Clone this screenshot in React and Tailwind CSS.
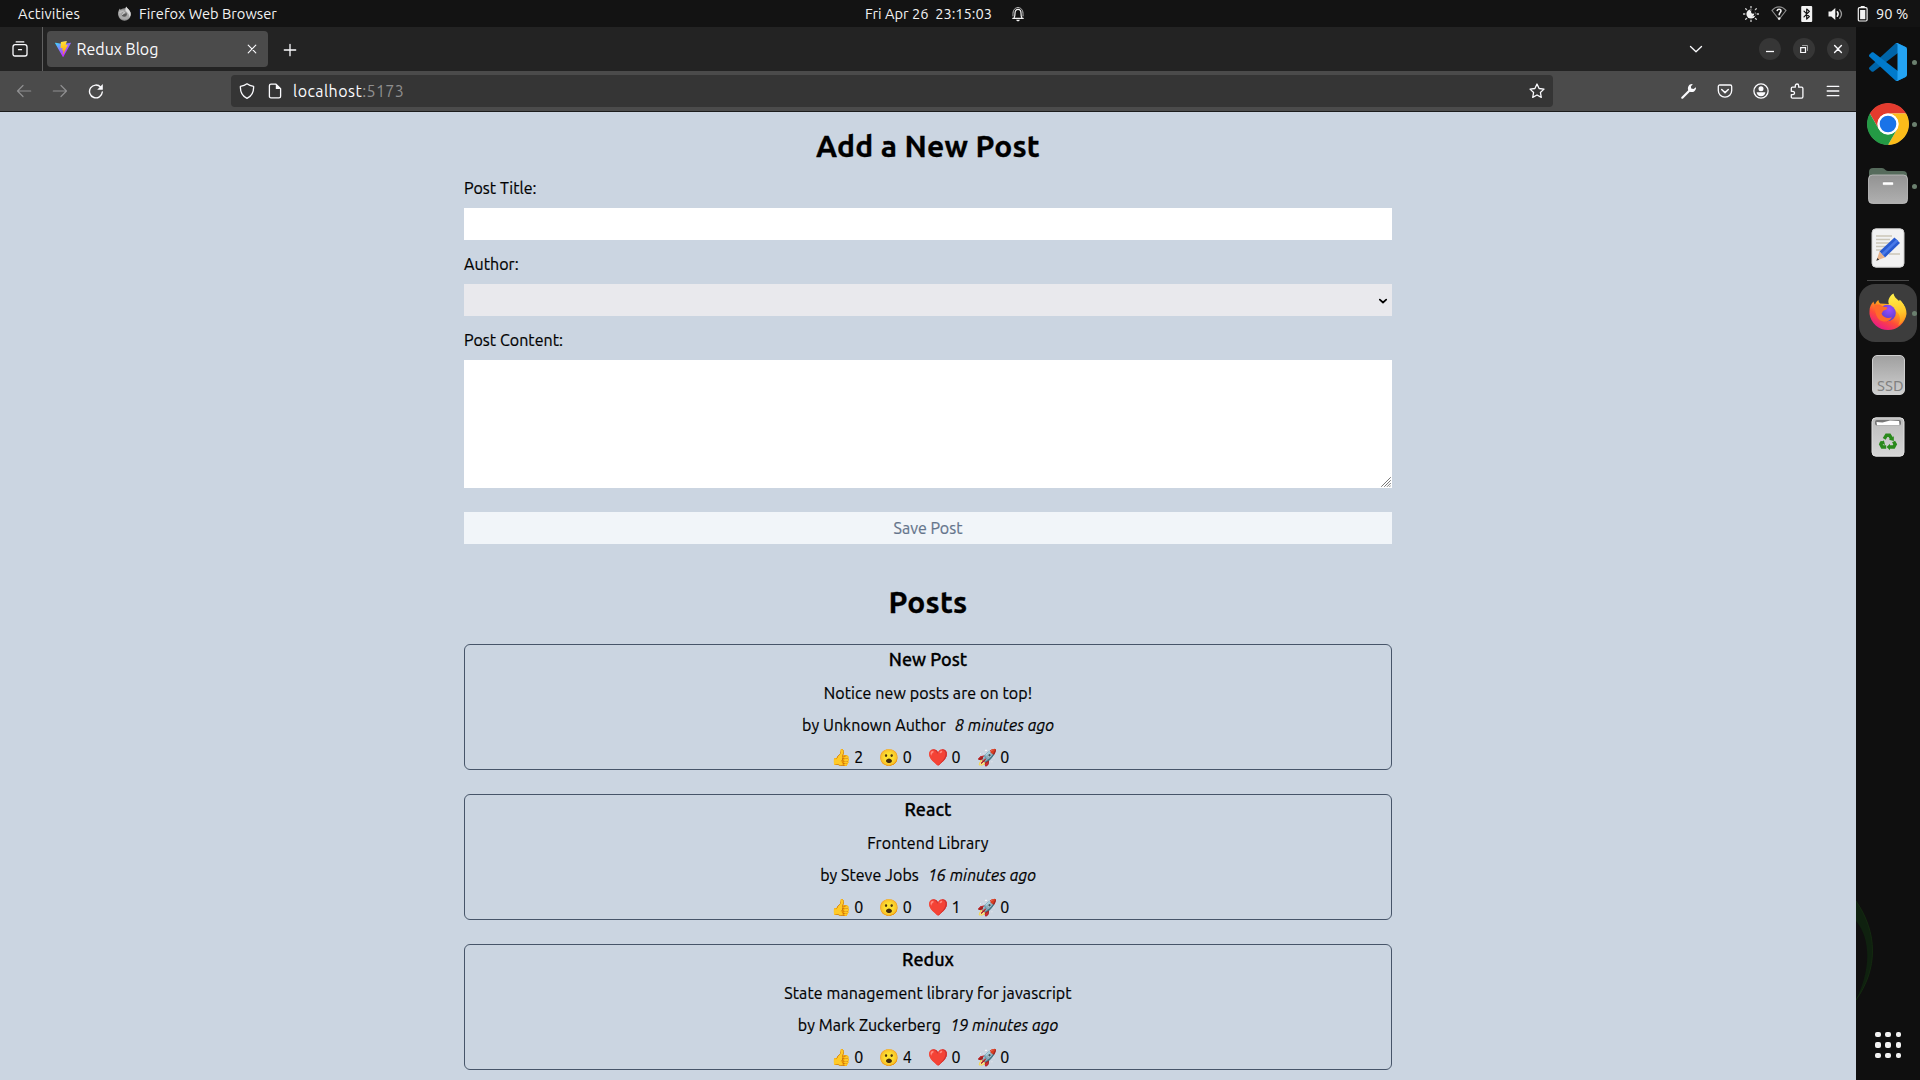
import React from "react";

const posts = [
  {
    title: "New Post",
    body: "Notice new posts are on top!",
    author: "Unknown Author",
    ago: "8 minutes ago",
    counts: [2, 0, 0, 0],
  },
  {
    title: "React",
    body: "Frontend Library",
    author: "Steve Jobs",
    ago: "16 minutes ago",
    counts: [0, 0, 1, 0],
  },
  {
    title: "Redux",
    body: "State management library for javascript",
    author: "Mark Zuckerberg",
    ago: "19 minutes ago",
    counts: [0, 4, 0, 0],
  },
];

const emojis = ["👍", "😮", "❤️", "🚀"];

function Icon({ children, size = 16, className = "" }) {
  return (
    <svg
      width={size}
      height={size}
      viewBox={`0 0 ${size} ${size}`}
      fill="none"
      stroke="currentColor"
      strokeWidth="1.3"
      strokeLinecap="round"
      strokeLinejoin="round"
      className={"block shrink-0 " + className}
    >
      {children}
    </svg>
  );
}

/* ---------- System bar ---------- */

function SystemBar() {
  return (
    <header className="grid h-[27px] shrink-0 grid-cols-[1fr_auto_1fr] items-center bg-[#131313] text-[14.67px] leading-[27px] text-[#f2f2f2]">
      <div className="flex items-center pl-[18px]">
        <span className="w-[99px] tracking-[0.2px]">Activities</span>
        <Icon className="mr-[6px]">
          <circle cx="7.5" cy="8.5" r="6.2" fill="#8f8f8f" stroke="none" />
          <path d="M1.2 8C1 5.5 2 3.5 3 2.5c.2 1 .7 1.500 1.500 1.800C6 3.500 7.500 4 8 4.500c-.3-1.500.4-3 1.600-4 .3 1.300 1 2 2 3 1.600 1.500 2.400 3 2.200 5.500A6.500 6.500 0 0 1 1.200 8Z" fill="#a9a9a9" stroke="none" />
          <path d="M9.500 1c.5 1.500 4 3 4 7a6 6 0 0 1-1 3.400C12.500 7 9 6 8.600 4.500 8.400 3.300 8.800 2 9.500 1Z" fill="#dcdcdc" stroke="none" />
          <circle cx="7.300" cy="8.300" r="2.500" fill="#5a5a5a" stroke="none" />
          <path d="M3 6.500c1-1 3.500-.8 5 .3-1.300 0-2 .8-2.600 1.500" stroke="#c4c4c4" strokeWidth="1.400" />
        </Icon>
        <span>Firefox Web Browser</span>
      </div>
      <div className="mr-[30px] flex items-center gap-[17px]">
        <span className="w-[129px] whitespace-pre text-center">{"Fri Apr 26  23:15:03"}</span>
        <Icon>
          <path d="M2.800 12.400h10.400M4 12.200c1-1.400 1-2.800 1-5C5 4.800 6.200 3.300 8 3.300s3 1.500 3 3.900c0 2.200 0 3.600 1 5" stroke="#f2f2f2" strokeWidth="1.200" />
          <path d="M3 10c-.3-4 .3-8 5-8.500 4.700.5 5.300 4.500 5 8.500" stroke="#bdbdbd" strokeWidth="1" />
          <path d="M6.200 13.800h3.600c-.3 1.200-1 1.500-1.800 1.500s-1.500-.3-1.800-1.500Z" fill="#f2f2f2" stroke="none" />
        </Icon>
      </div>
      <div className="flex items-center justify-end pr-[12px]">
        <Icon className="mr-[12px]">
          <circle cx="8" cy="8" r="4.600" fill="#f2f2f2" stroke="none" />
          <path d="M9.600 3.200a3.500 3.500 0 1 0 3.300 5.200" fill="#131313" stroke="none" />
          <path d="M9 3.400a3.400 3.400 0 1 0 4 4.600 2.600 2.600 0 0 1-4-4.600Z" fill="#131313" stroke="none" />
          <circle cx="8.200" cy="7.600" r="3" fill="#f2f2f2" stroke="none" />
          <circle cx="10" cy="5.800" r="2" fill="#131313" stroke="none" />
          <path d="M8 .5v1.300M8 14.200v1.300M.5 8h1.300M14.200 8h1.300M2.700 2.700l.9.900M12.400 12.400l.9.900M2.700 13.300l.9-.9M12.400 3.600l.9-.9" stroke="#d0d0d0" />
        </Icon>
        <Icon className="mr-[12px]">
          <path d="M1 4.500C5-.3 11-.3 15 4.500L8 13.500Z" stroke="#8a8a8a" strokeWidth="1.200" />
          <path d="M6.200 4.500c.2-1.700 3.800-1.700 3.800.2C10 6.500 8.200 6.500 8.200 8.800" stroke="#f2f2f2" strokeWidth="1.600" />
          <circle cx="8.200" cy="12.500" r="1.200" fill="#f2f2f2" stroke="none" />
        </Icon>
        <Icon className="mr-[12px]">
          <rect x="2.200" y="0" width="11" height="16" rx="1" fill="#f2f2f2" stroke="none" />
          <path d="M5 5.200l5.400 5.400L7.700 13V3l2.700 2.400L5 10.800" stroke="#131313" strokeWidth="1.200" />
        </Icon>
        <Icon className="mr-[11px]">
          <path d="M1.500 5.500h2.800L8.300 2v12L4.300 10.500H1.500Z" fill="#f2f2f2" stroke="none" />
          <path d="M10.300 5.800c1 1.300 1 3.100 0 4.400" stroke="#f2f2f2" strokeWidth="1.500" />
          <path d="M12.800 3.800c2 2.500 2 5.900 0 8.400" stroke="#9a9a9a" strokeWidth="1.300" />
        </Icon>
        <Icon className="mr-[6px]">
          <path d="M6.700 0h4v2h-4z" fill="#f2f2f2" stroke="none" />
          <rect x="4.300" y="1.700" width="8.800" height="13.300" rx="1.200" stroke="#f2f2f2" strokeWidth="1.200" />
          <rect x="6.100" y="4" width="5.200" height="9.200" fill="#f2f2f2" stroke="none" />
        </Icon>
        <span className="w-[32px] whitespace-nowrap">90 %</span>
      </div>
    </header>
  );
}

/* ---------- Browser chrome ---------- */

function ViteLogo() {
  return (
    <svg width="16" height="16" viewBox="0 0 256 257" className="block shrink-0">
      <defs>
        <linearGradient id="viteA" x1="-.828%" x2="57.636%" y1="7.652%" y2="78.411%">
          <stop offset="0%" stopColor="#41D1FF" />
          <stop offset="100%" stopColor="#BD34FE" />
        </linearGradient>
        <linearGradient id="viteB" x1="43.376%" x2="50.316%" y1="2.242%" y2="89.030%">
          <stop offset="0%" stopColor="#FFEA83" />
          <stop offset="8.333%" stopColor="#FFDD35" />
          <stop offset="100%" stopColor="#FFA800" />
        </linearGradient>
      </defs>
      <path fill="url(#viteA)" d="M255.153 37.938L134.897 252.976c-2.483 4.440-8.862 4.466-11.382.048L.875 37.958c-2.746-4.814 1.371-10.646 6.827-9.670l120.385 21.517a6.537 6.537 0 0 0 2.322-.004l117.867-21.483c5.438-.991 9.574 4.796 6.877 9.620Z" />
      <path fill="url(#viteB)" d="M185.432.063L96.440 17.501a3.268 3.268 0 0 0-2.634 3.014l-5.474 92.456a3.268 3.268 0 0 0 3.997 3.378l24.777-5.718c2.318-.535 4.413 1.507 3.936 3.838l-7.361 36.047c-.495 2.426 1.782 4.500 4.151 3.780l15.304-4.649c2.372-.720 4.652 1.360 4.150 3.788l-11.698 56.621c-.732 3.542 3.979 5.473 5.943 2.437l1.313-2.028l72.516-144.720c1.215-2.423-.880-5.186-3.540-4.672l-25.505 4.922c-2.396.462-4.435-1.770-3.759-4.114l16.646-57.705c.677-2.350-1.370-4.583-3.769-4.113Z" />
    </svg>
  );
}

function WindowButton({ children }) {
  return (
    <div className="flex size-[22px] items-center justify-center rounded-full bg-[#363636]">
      {children}
    </div>
  );
}

function TabStrip() {
  return (
    <div className="flex h-11 shrink-0 items-center bg-[#232323] text-[#fbfbfe]">
      <div className="flex h-full w-[43px] items-center border-r border-[#606060] pl-[12px]">
        <Icon>
          <path d="M4.200.9h7.600M1 6c0-1.500.8-2.300 2.200-2.300h9.600C14.200 3.700 15 4.500 15 6v7c0 1.300-.7 2-2 2H3c-1.300 0-2-.7-2-2ZM6.500 8.700h3" />
        </Icon>
      </div>
      <div className="ml-1 flex h-9 w-[221px] items-center rounded bg-[#4b4b4b] pl-2 pr-[11px]">
        <ViteLogo />
        <span className="ml-[5.500px] flex-1 text-base leading-9">Redux Blog</span>
        <Icon size={10}>
          <path d="M1.200 1.200l7.600 7.600M8.800 1.200L1.200 8.800" strokeWidth="1.100" />
        </Icon>
      </div>
      <Icon size={14} className="ml-[14.500px] mt-px">
        <path d="M7 1.300v11.400M1.300 7h11.400" />
      </Icon>
      <div className="ml-auto flex items-center pr-[7px]">
        <Icon size={14} className="mr-[56px]">
          <path d="M1.500 4.500L7 9.700l5.500-5.200" />
        </Icon>
        <div className="flex gap-3">
          <WindowButton>
            <Icon size={10}>
              <path d="M1 7.500h8" strokeLinecap="butt" />
            </Icon>
          </WindowButton>
          <WindowButton>
            <Icon size={10}>
              <path d="M1.700 3.700h4.800v4.800H1.700z" strokeWidth="1.200" strokeLinejoin="miter" />
              <path d="M3.500 1.500h5v5" stroke="#a0a0a0" strokeWidth="1" strokeLinejoin="miter" />
            </Icon>
          </WindowButton>
          <WindowButton>
            <Icon size={10}>
              <path d="M1.600 1.600l6.800 6.800M8.400 1.600L1.600 8.400" strokeWidth="1.400" />
            </Icon>
          </WindowButton>
        </div>
      </div>
    </div>
  );
}

function Toolbar() {
  return (
    <div className="flex h-[41px] shrink-0 items-center border-b border-[#1b1b1b] bg-[#4b4b4b] pr-[15.500px] text-[#fbfbfe]">
      <div className="flex w-[231px] items-center gap-5 pl-4">
        <Icon className="text-[#8f8f91]">
          <path d="M14.700 8H1.500M7 2.500L1.500 8 7 13.500" strokeWidth="1.200" />
        </Icon>
        <Icon className="text-[#8f8f91]">
          <path d="M1.300 8h13.200M9 2.500L14.500 8 9 13.500" strokeWidth="1.200" />
        </Icon>
        <Icon>
          <path d="M14.300 9A6.400 6.400 0 1 1 12.700 4.200" strokeWidth="1.400" />
          <path d="M14.800 1v5.200a.5.500 0 0 1-.5.500H9.200Z" fill="currentColor" stroke="none" />
        </Icon>
      </div>
      <div className="flex h-8 w-[1322px] items-center rounded bg-[#353535] pl-2 pr-2">
        <Icon>
          <path d="M8 .8c2 1.600 4.300 2.200 6.600 2.500.3 5.400-1.800 9.700-6.600 12C3.200 13 1.100 8.700 1.400 3.300 3.700 3 6 2.400 8 .8Z" strokeWidth="1.300" />
        </Icon>
        <Icon className="ml-3">
          <path d="M4 1.200h5l4.600 4.600v7.400c0 1-.6 1.600-1.600 1.600H4c-1 0-1.600-.6-1.600-1.600V2.800c0-1 .6-1.600 1.600-1.600Z" />
          <path d="M8.800 1.200v4.800h4.800Z" fill="currentColor" stroke="none" />
        </Icon>
        <span className="ml-[10px] text-base leading-8">
          <span className="tracking-[0.450px]">localhost</span>
          <span className="tracking-[0.400px] text-[#8f8f8f]">:5173</span>
        </span>
        <Icon className="ml-auto">
          <path d="M8 1l2.100 4.500 4.900.6-3.600 3.400.9 4.900L8 12l-4.300 2.400.9-4.900L1 6.100l4.900-.6Z" />
        </Icon>
      </div>
      <div className="ml-auto flex gap-5">
        <Icon>
          <path d="M1.300 14.700L8.500 7.500" strokeWidth="2.200" />
          <path d="M15 4.200c.3 2.500-1.600 4.900-4.200 4.800-2.700 0-4.400-2.200-3.800-4.600C7.500 2 9.600.8 11.800 1.100L9.900 3.400l.3 2.200 2.300.3Z" fill="currentColor" stroke="none" />
        </Icon>
        <Icon>
          <path d="M2.800 2h10.400c.9 0 1.500.6 1.500 1.500v4c0 3.700-3 6.700-6.700 6.700s-6.700-3-6.700-6.700v-4C1.300 2.600 1.900 2 2.800 2Z" strokeWidth="1.300" />
          <path d="M4.700 6.500L8 9.600l3.300-3.100" strokeWidth="1.500" />
        </Icon>
        <Icon>
          <circle cx="8" cy="8" r="7.100" />
          <circle cx="8" cy="5.800" r="2.500" fill="currentColor" stroke="none" />
          <path d="M3.600 9.200h8.800c-.2 2.300-2 4.100-4.400 4.100S3.800 11.500 3.600 9.200Z" fill="currentColor" stroke="none" />
        </Icon>
        <Icon>
          <path d="M2.300 7V5.400c0-.8.5-1.200 1.200-1.200h2.800V2.700c0-2.300 3.400-2.300 3.400 0v1.500h2.900c.8 0 1.300.5 1.300 1.300v8.300c0 .8-.5 1.300-1.300 1.300H3.500c-.7 0-1.200-.4-1.200-1.200v-2.200H4c2 0 2-3.400 0-3.400H2.300Z" />
        </Icon>
        <Icon>
          <path d="M2.200 3.300h11.600M2.200 8h11.600M2.200 12.700h11.600" />
        </Icon>
      </div>
    </div>
  );
}

/* ---------- Blog page ---------- */

function PostCard({ post }) {
  return (
    <article className="space-y-2 rounded-md border border-[#475569] text-center">
      <h3 className="mb-2 text-lg font-medium leading-7 [-webkit-text-stroke:0.3px]">{post.title}</h3>
      <p className="tracking-[0.1px]">{post.body}</p>
      <p className="flex justify-center gap-[9px] tracking-[0.050px]">
        <span>by {post.author}</span>
        <i>{post.ago}</i>
      </p>
      <div className="flex h-6 justify-center pr-[16px]">
        {post.counts.map((count, i) => (
          <button key={emojis[i]} className="flex w-[48.700px] items-center whitespace-nowrap pl-[8px] text-left">
            <span className="w-[23.500px]">{emojis[i]}</span>
            <span>{count}</span>
          </button>
        ))}
      </div>
    </article>
  );
}

function BlogPage() {
  return (
    <main className="flex-1 overflow-hidden bg-[#cbd5e1] pt-4 text-base text-black [-webkit-text-stroke:0.2px]">
      <div className="mx-auto w-1/2">
        <h2 className="text-center text-3xl font-bold leading-9 tracking-[0.200px] [-webkit-text-stroke:0.3px]">Add a New Post</h2>
        <form className="mt-3 flex flex-col gap-2">
          <label className="tracking-[0.050px]">Post Title:</label>
          <div className="mb-1 h-8 bg-white" />
          <label className="tracking-[0.050px]">Author:</label>
          <div className="mb-1 flex h-8 items-center justify-end bg-[#e9e9ed] pr-[4px]">
            <Icon size={10} className="mt-px text-black">
              <path d="M1.800 3.600L5 6.500l3.200-2.900" strokeWidth="1.700" />
            </Icon>
          </div>
          <label className="tracking-[0.050px]">Post Content:</label>
          <div className="mb-4 flex h-32 items-end justify-end bg-white p-px">
            <Icon size={10} className="text-[#777]">
              <path d="M.5 9.500l9-9M3.500 9.500l6-6M6.300 9.500l3.200-3.200M8.800 9.500l.7-.7" strokeWidth="1" />
            </Icon>
          </div>
          <button type="button" className="h-8 bg-[#f1f5f9] text-[#64748b]">Save Post</button>
        </form>
        <h2 className="mt-10 text-center text-3xl font-bold leading-9 tracking-[0.200px] [-webkit-text-stroke:0.3px]">Posts</h2>
        <section className="mt-6 space-y-6">
          {posts.map((post) => (
            <PostCard key={post.title} post={post} />
          ))}
        </section>
      </div>
    </main>
  );
}

/* ---------- Dock ---------- */

function DockItem({ running, active, children }) {
  return (
    <div className="flex h-[58px] w-[64px] items-center">
      <div
        className={
          "ml-[3px] flex size-[58px] items-center justify-center " +
          (active ? "rounded-2xl bg-[#3d3d3d]" : "")
        }
      >
        {children}
      </div>
      {running && <span className="-ml-[5px] size-[5px] rounded-full bg-[#6b806f]" />}
    </div>
  );
}

function VsCode() {
  return (
    <svg width="38" height="38" viewBox="0 0 100 100">
      <path fill="#0065A9" d="M96.460 10.800L75.860.88C73.470-.27 70.620.21 68.750 2.080L1.300 63.580c-1.820 1.660-1.810 4.510 0 6.160l5.510 5.010c1.490 1.350 3.720 1.450 5.320.24L93.360 13.370C96.090 11.300 100 13.250 100 16.670v-.24c0-2.400-1.370-4.590-3.540-5.630Z" />
      <path fill="#007ACC" d="M96.460 89.200L75.860 99.120c-2.390 1.150-5.240.67-7.110-1.200L1.300 36.420c-1.820-1.660-1.810-4.510 0-6.170l5.510-5c1.490-1.350 3.720-1.450 5.320-.24l81.230 61.620c2.730 2.070 6.640.12 6.640-3.300v.24c0 2.400-1.370 4.590-3.540 5.630Z" />
      <path fill="#24A3F3" d="M75.860 99.130c-2.390 1.150-5.240.66-7.110-1.210C71.060 100.220 75 98.590 75 95.330V4.670C75 1.410 71.060-.22 68.750 2.080 70.620.21 73.470-.27 75.860.87l20.600 9.910C98.620 11.820 100 14.010 100 16.410v67.180c0 2.400-1.380 4.590-3.540 5.630Z" />
    </svg>
  );
}

function Chrome() {
  return (
    <svg width="42" height="42" viewBox="0 0 48 48">
      <circle cx="24" cy="24" r="23.500" fill="#fff" />
      <path fill="#E33B2E" d="M3.220 12A24 24 0 0 1 44.780 12H24a12 12 0 0 0-10.390 18Z" />
      <path fill="#FBBC1A" d="M44.780 12A24 24 0 0 1 24 48l10.390-18A12 12 0 0 0 24 12Z" />
      <path fill="#249A45" d="M24 48A24 24 0 0 1 3.220 12l10.390 18a12 12 0 0 0 20.780 0Z" />
      <circle cx="24" cy="24" r="12" fill="#fff" />
      <circle cx="24" cy="24" r="9.500" fill="#1A73E8" />
    </svg>
  );
}

function Files() {
  return (
    <svg width="40" height="38" viewBox="0 0 40 38">
      <defs>
        <linearGradient id="folder" x1="0" y1="0" x2="0" y2="1">
          <stop offset="0" stopColor="#929292" />
          <stop offset="1" stopColor="#b0b0b0" />
        </linearGradient>
      </defs>
      <path d="M1 5a4 4 0 0 1 4-4h9c3 0 3 3 6 3h15a4 4 0 0 1 4 4v10H1Z" fill="#566b5c" />
      <rect x=".5" y="8" width="39" height="28.500" rx="4" fill="url(#folder)" stroke="#c4c4c4" strokeWidth=".8" />
      <rect x="14.500" y="15" width="11" height="3.200" rx="1" fill="#fff" stroke="#777" strokeWidth=".4" />
    </svg>
  );
}

function TextEditor() {
  return (
    <svg width="34" height="40" viewBox="0 0 34 40">
      <rect x="1" y=".8" width="32" height="38.400" rx="4" fill="#f2f2f2" stroke="#cfcfcf" />
      <path d="M5 8h16M5 11.500h14M5 15h16M5 18.500h12M5 22h8M18 26h11" stroke="#cbc6b8" strokeWidth="1.400" />
      <path d="M8.500 23.500L23.500 9.500l5.500 5.500L14 29.500Z" fill="#2a5bd0" />
      <path d="M10.500 25.500L25.500 11.300l1.800 1.800L12.300 27.500Z" fill="#4a7ae8" />
      <path d="M8.500 23.500l5.500 6-8.500 3Z" fill="#e9b48a" />
      <path d="M6.400 30l1.800 1.800-2.900.9Z" fill="#333" />
    </svg>
  );
}

function Firefox() {
  return (
    <svg width="40" height="40" viewBox="0 0 40 40">
      <defs>
        <linearGradient id="ffBody" x1=".85" y1=".1" x2=".25" y2=".95">
          <stop offset="0" stopColor="#FFE226" />
          <stop offset=".35" stopColor="#FF9A1F" />
          <stop offset=".65" stopColor="#FF4A3A" />
          <stop offset="1" stopColor="#E8188A" />
        </linearGradient>
        <linearGradient id="ffTail" x1=".5" y1="0" x2=".6" y2="1">
          <stop offset="0" stopColor="#FFF04A" />
          <stop offset=".6" stopColor="#FFC62A" />
          <stop offset="1" stopColor="#FF8A1A" />
        </linearGradient>
        <radialGradient id="ffGlobe" cx=".6" cy=".3" r=".8">
          <stop offset="0" stopColor="#9A4DFF" />
          <stop offset="1" stopColor="#4A3AC0" />
        </radialGradient>
      </defs>
      <path d="M1.500 18c0-4 1.500-7 4-9.500.2 1.500.8 2.300 1.500 3C8 9 9 8 10.500 7c0 1.500.6 2.700 1.700 3.500l16 1L33 8.500c4 4 5.700 8 5.500 12.500A18.700 18.700 0 0 1 1.500 21Z" fill="url(#ffBody)" />
      <path d="M25.500.5c.5 3.500 3 5 5.500 7.500l.8-1.200c3.500 3.500 6.200 8 5.700 13.700-.4 5-3.200 9.500-7.500 12 2-3 2.500-7 1.500-10-1.500-5-9.500-7-11-12.500C19.800 6.500 22 2.500 25.500.5Z" fill="url(#ffTail)" />
      <circle cx="19.500" cy="20" r="8.300" fill="url(#ffGlobe)" />
      <path d="M6.500 12c3.500-1 6-.5 8 1.500 2 .2 4 .5 5 1.200-.3 1.800-2.500 2.300-4.200 3-1 .8-.8 2-1.800 2.800 1.500 4 6 5.500 10.500 3.800-1.500 3.200-5 4.700-8.500 4.200-5-.8-8.500-5-9-16.500Z" fill="#FF6A2A" />
    </svg>
  );
}

function Ssd() {
  return (
    <div className="flex h-10 w-[33px] items-end justify-end overflow-hidden rounded-[5px] border border-[#cfcfcf] bg-linear-to-b from-[#a0a0a0] to-[#cfcfcf] font-['Noto_Sans',sans-serif] text-[14.500px] leading-[18px] text-[#808080]">
      SSD
    </div>
  );
}

function Trash() {
  return (
    <svg width="34" height="40" viewBox="0 0 34 40">
      <defs>
        <linearGradient id="bin" x1="0" y1="0" x2="0" y2="1">
          <stop offset="0" stopColor="#bdbdbd" />
          <stop offset="1" stopColor="#d6d6d6" />
        </linearGradient>
      </defs>
      <rect x="1" y=".8" width="32" height="38.400" rx="4" fill="url(#bin)" stroke="#e2e2e2" />
      <rect x="4" y="3" width="26" height="5.500" rx="2" fill="#777" />
      <path d="M6 8.300L5.500 5l6 .5L19 3.500l9 .5.500 4.300Z" fill="#fff" />
      <g fill="none" stroke="#2a8a1c" strokeWidth="3.400">
        <path d="M13.200 21.800l2.300-3.600h3l2 3.300" />
        <path d="M22.600 24.500l1.600 2.800-1.500 2.700H18.500" />
        <path d="M15.200 30h-3.900l-1.500-2.700 1.500-2.600" />
      </g>
      <g fill="#2a8a1c">
        <path d="M22.800 19.200v4.800l-4.800-1.300Z" />
        <path d="M19 26.700v6.600l-3.400-3.300Z" />
        <path d="M8.300 25.500l4.600-2 1.200 4.400Z" />
      </g>
    </svg>
  );
}

function Dock() {
  return (
    <aside className="relative flex w-16 shrink-0 flex-col overflow-hidden bg-[#0f0f0f] pt-[6px]">
      <svg className="absolute left-0 top-[870px]" width="20" height="106" viewBox="0 0 20 106">
        <path d="M0 4C22 36 22 72 0 103 15 72 15 42 0 24Z" fill="#0f210f" />
        <path d="M0 4C22 36 22 72 0 103" stroke="#142a10" fill="none" />
      </svg>
      <div className="flex flex-col gap-1">
        <DockItem running><VsCode /></DockItem>
        <DockItem running><Chrome /></DockItem>
        <DockItem running><Files /></DockItem>
        <DockItem><TextEditor /></DockItem>
      </div>
      <div className="ml-[11px] mt-[3px] h-px w-[42px] bg-[#484848]" />
      <div className="mt-[3px] flex flex-col gap-1">
        <DockItem active running><Firefox /></DockItem>
        <DockItem><Ssd /></DockItem>
        <DockItem><Trash /></DockItem>
      </div>
      <div className="mb-[22px] ml-[19px] mt-auto grid w-[26px] grid-cols-3 gap-[5px]">
        {Array.from({ length: 9 }, (_, i) => (
          <span key={i} className="size-[5.500px] rounded-[2px] bg-[#f2f2f2]" />
        ))}
      </div>
    </aside>
  );
}

export default function App() {
  return (
    <div className="flex h-[1080px] w-[1920px] flex-col overflow-hidden bg-[#0f0f0f] font-['Ubuntu','Noto_Sans',sans-serif]">
      <SystemBar />
      <div className="flex min-h-0 flex-1">
        <div className="flex w-[1856px] flex-col">
          <TabStrip />
          <Toolbar />
          <BlogPage />
        </div>
        <Dock />
      </div>
    </div>
  );
}
